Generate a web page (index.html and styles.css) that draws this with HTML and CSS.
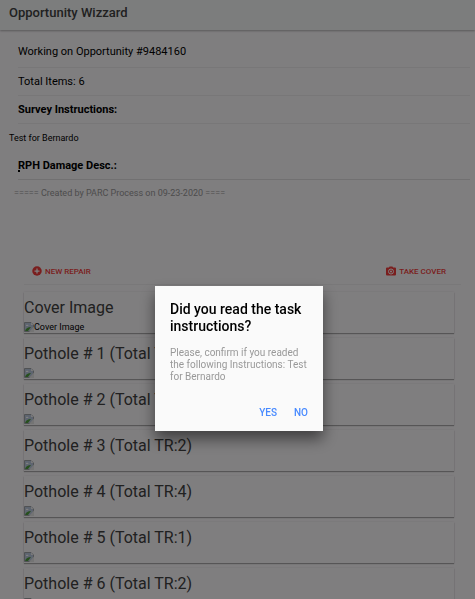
FILE: index.html
```html
<!DOCTYPE html>
<html lang="en">
<head>
  <meta charset="UTF-8" />
  <meta name="viewport" content="width=device-width, initial-scale=1.0" />
  <title>Opportunity Wizzard</title>
  <link rel="stylesheet" href="styles.css">
</head>
<body>
  <!-- shared icons -->
  <svg class="sprite" width="0" height="0" aria-hidden="true">
    <symbol id="icon-broken" viewBox="0 0 10 10">
      <path d="M0.5 0.5H7L9.5 3V9.5H0.5Z" fill="#bccbe0" stroke="#a0a4a8" stroke-width="1" />
      <path d="M7 0.5V3H9.5Z" fill="#f4f4f4" />
      <path d="M2 3.5C2 2.5 4.5 2.5 4.5 4H2Z" fill="#fff" />
      <path d="M1 9C2 6 4 5 7 5L4 9Z" fill="#4e9f3c" />
      <path d="M5 10L10 4.500V10Z" fill="#e8e8e8" />
    </symbol>
  </svg>

  <div class="app">
    <header class="toolbar">
      <h1>Opportunity Wizzard</h1>
    </header>

    <main>
      <section class="info">
        <div class="row first">Working on Opportunity #9484160</div>
        <div class="row">Total Items: 6</div>
        <h2 class="row">Survey Instructions:</h2>
        <p class="instructions">Test for Bernardo</p>
        <h2 class="row desc">RPH Damage Desc.:</h2>
        <p class="created">===== Created by PARC Process on 09-23-2020 ====</p>
      </section>

      <div class="actions">
        <button type="button">
          <svg width="10" height="10" viewBox="0 0 20 20" aria-hidden="true">
            <circle cx="10" cy="10" r="9.500" fill="currentColor" />
            <path d="M10 5V15M5 10H15" stroke="#fff" stroke-width="2.500" />
          </svg>
          New repair
        </button>
        <button type="button">
          <svg width="10" height="10" viewBox="0 0 20 20" aria-hidden="true">
            <path d="M2 3H6L7 1H13L14 3H18Q20 3 20 5V17Q20 19 18 19H2Q0 19 0 17V5Q0 3 2 3Z" fill="currentColor" />
            <circle cx="10" cy="11" r="5" fill="none" stroke="#fff" stroke-width="2" />
            <circle cx="10" cy="11" r="2" fill="#fff" />
          </svg>
          Take cover
        </button>
      </div>

      <div class="cards" id="cards"></div>
    </main>
  </div>

  <div class="backdrop">
    <div class="alert" role="alertdialog" aria-labelledby="alert-title" aria-describedby="alert-message">
      <h2 id="alert-title">Did you read the task instructions?</h2>
      <p id="alert-message">Please, confirm if you readed the following Instructions: Test for Bernardo</p>
      <div class="alert-buttons">
        <button type="button">Yes</button>
        <button type="button">No</button>
      </div>
    </div>
  </div>

  <script>
    const items = [
      { title: "Cover Image", alt: "Cover Image" },
      { title: "Pothole # 1 (Total TR:3)", alt: "" },
      { title: "Pothole # 2 (Total TR:2)", alt: "" },
      { title: "Pothole # 3 (Total TR:2)", alt: "" },
      { title: "Pothole # 4 (Total TR:4)", alt: "" },
      { title: "Pothole # 5 (Total TR:1)", alt: "" },
      { title: "Pothole # 6 (Total TR:2)", alt: "" }
    ];

    const cards = document.getElementById("cards");

    items.forEach(item => {
      const card = document.createElement("article");
      card.className = "card";
      card.innerHTML = `<h3>${item.title}</h3><div class="photo"><svg width="10" height="10" aria-hidden="true"><use href="#icon-broken" /></svg>${item.alt}</div>`;
      cards.appendChild(card);
    });
  </script>
</body>
</html>
```
FILE: styles.css
```css
* {
  box-sizing: border-box;
}

body {
  margin: 0;
  font-family: Roboto, sans-serif;
  font-size: 11px;
  color: #000;
  background-color: #fffcff;
}

h1, h2, h3, p {
  margin: 0;
}

button {
  font-family: inherit;
  border: none;
  background: none;
  padding: 0;
  text-transform: uppercase;
  cursor: pointer;
}

.sprite {
  position: absolute;
}

.app {
  height: 100vh;
  overflow: hidden;
}

.toolbar {
  height: 30px;
  padding: 4px 9px;
  background-color: #f8fafa;
  box-shadow: 0 1px 2px rgba(0, 0, 0, 0.3);
}

.toolbar h1 {
  font-size: 13px;
  line-height: 18px;
  font-weight: 500;
  color: #424242;
}

.info {
  padding-top: 6px;
}

.row {
  margin: 0 5px 0 18px;
  height: 28px;
  line-height: 27px;
  font-size: 11px;
  border-bottom: 1px solid #f0eef0;
}

.row.first {
  height: 32px;
  line-height: 31px;
}

h2.row {
  font-weight: 700;
}

.instructions {
  padding: 0 9px;
  font-size: 9px;
  line-height: 28px;
}

.row.desc {
  position: relative;
  border-color: #e2e0e2;
}

.row.desc::before {
  content: "";
  position: absolute;
  left: 0;
  bottom: 7px;
  width: 2px;
  height: 2px;
  background-color: #000;
}

.created {
  padding: 0 14px;
  font-size: 9px;
  line-height: 26px;
  color: #999;
}

.actions {
  display: flex;
  justify-content: space-between;
  margin: 52px 14px 0 24px;
  padding: 0 15px 0 8px;
  height: 27px;
  border-bottom: 1px solid #f2f0f2;
}

.actions button {
  display: flex;
  align-items: center;
  gap: 3px;
  font-size: 8px;
  font-weight: 500;
  color: #f53d3d;
}

.cards {
  display: flex;
  flex-direction: column;
  gap: 5px;
  padding: 7px 21px 0 24px;
}

.card {
  height: 41px;
  flex: none;
  box-shadow: 0 1px 1px rgba(0, 0, 0, 0.3), 0 0 2px rgba(0, 0, 0, 0.1);
}

.card h3 {
  padding-top: 4px;
  font-size: 16px;
  line-height: 24px;
  font-weight: 400;
  color: #424242;
}

.photo {
  display: flex;
  align-items: center;
  height: 14px;
  font-size: 9px;
}

.backdrop {
  position: fixed;
  inset: 0;
  display: flex;
  align-items: center;
  justify-content: center;
  padding: 118px 0 0 3px;
  background-color: rgba(0, 0, 0, 0.5);
}

.alert {
  width: 168px;
  padding: 15px 14px 12px 15px;
  background-color: #fafafa;
  box-shadow: 0 8px 14px rgba(0, 0, 0, 0.5);
}

.alert h2 {
  font-size: 14px;
  line-height: 17px;
  font-weight: 500;
}

.alert p {
  margin-top: 12px;
  font-size: 10px;
  line-height: 12px;
  color: #999;
}

.alert-buttons {
  display: flex;
  justify-content: flex-end;
  gap: 17px;
  margin-top: 24px;
  padding-right: 1px;
}

.alert-buttons button {
  font-size: 10px;
  line-height: 12px;
  font-weight: 500;
  color: #488aff;
}
```
